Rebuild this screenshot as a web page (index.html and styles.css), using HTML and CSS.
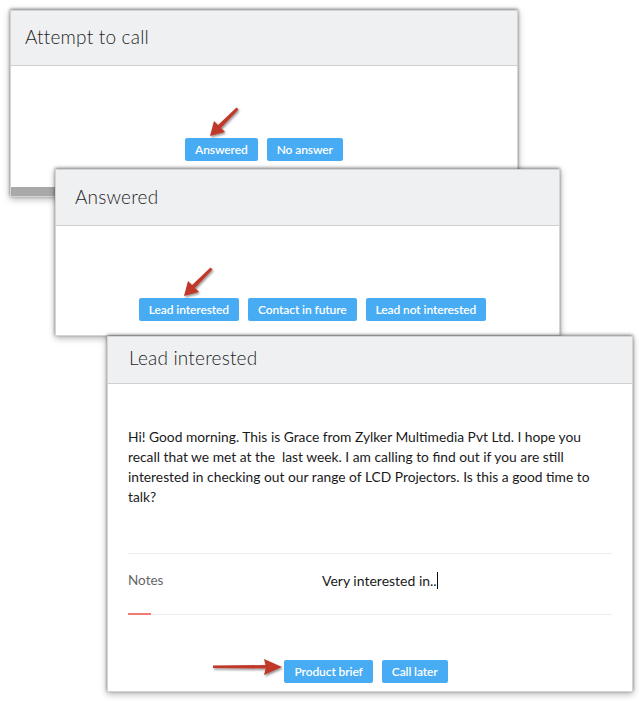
FILE: index.html
```html
<!DOCTYPE html>
<html>
<head>
<meta charset="utf-8">
<link rel="stylesheet" href="styles.css">
</head>
<body>
<div class="canvas">
  <section class="card card-1">
    <header class="card-head"><h2>Attempt to call</h2></header>
    <div class="card-body body-1">
      <div class="btns">
        <span class="btn">Answered</span>
        <span class="btn">No answer</span>
      </div>
    </div>
    <div class="scrollbar"></div>
  </section>

  <section class="card card-2">
    <header class="card-head"><h2>Answered</h2></header>
    <div class="card-body body-2">
      <div class="btns">
        <span class="btn">Lead interested</span>
        <span class="btn">Contact in future</span>
        <span class="btn">Lead not interested</span>
      </div>
    </div>
  </section>

  <section class="card card-3">
    <header class="card-head head-3"><h2>Lead interested</h2></header>
    <div class="card-body body-3">
      <p class="script">Hi! Good morning. This is Grace from Zylker Multimedia Pvt Ltd. I hope you<br>recall that we met at the &nbsp;last week. I am calling to find out if you are still<br>interested in checking out our range of LCD Projectors. Is this a good time to<br>talk?</p>
      <div class="notes">
        <span class="notes-label">Notes</span>
        <span class="notes-value">Very interested in..<span class="caret"></span></span>
      </div>
      <div class="btns btns-3">
        <span class="btn">Product brief</span>
        <span class="btn">Call later</span>
      </div>
    </div>
  </section>

  <svg class="arrow arrow-1" width="40" height="40" viewBox="0 0 40 40">
    <defs>
      <filter id="sh" x="-50%" y="-50%" width="200%" height="200%">
        <feDropShadow dx="1" dy="1.5" stdDeviation="1" flood-color="#000" flood-opacity="0.45"/>
      </filter>
    </defs>
    <g filter="url(#sh)">
      <polygon points="32.5,3.5 34.5,5.5 16,25 13,22" fill="#c0392b"/>
      <polygon points="6,32 10,17 21,28" fill="#c0392b"/>
    </g>
  </svg>
  <svg class="arrow arrow-2" width="40" height="40" viewBox="0 0 40 40">
    <g filter="url(#sh)">
      <polygon points="32.5,3.5 34.5,5.5 16,25 13,22" fill="#c0392b"/>
      <polygon points="6,32 10,17 21,28" fill="#c0392b"/>
    </g>
  </svg>
  <svg class="arrow arrow-3" width="80" height="24" viewBox="0 0 80 24">
    <g filter="url(#sh)">
      <polygon points="3,9.5 3,12 58,12.5 58,9" fill="#c0392b"/>
      <polygon points="72,11 54,3 56,11 54,19" fill="#c0392b"/>
    </g>
  </svg>
</div>
</body>
</html>
```

FILE: styles.css
```css
* { box-sizing: border-box; }
html, body {
  margin: 0;
  padding: 0;
  background: #ffffff;
}
body {
  font-family: "Lato", "Open Sans", sans-serif;
  color: #333;
}
.canvas {
  position: relative;
  width: 643px;
  height: 701px;
}
.card {
  position: absolute;
  background: #fff;
  border: 1px solid #d4d4d4;
  box-shadow: 0 -1px 3px rgba(0,0,0,0.45), 0 2px 7px rgba(0,0,0,0.3);
  display: flex;
  flex-direction: column;
}
.card-1 { left: 10px; top: 10px; width: 508px; height: 187px; }
.card-2 { left: 55px; top: 169px; width: 505px; height: 167px; }
.card-3 { left: 107px; top: 336px; width: 526px; height: 356px; }

.card-head {
  background: #eff0f2;
  border-bottom: 1px solid #cfd0d2;
  height: 55px;
  display: flex;
  align-items: center;
  padding-left: 14px;
  padding-bottom: 3px;
  flex: none;
}
.card-2 .card-head { padding-left: 19px; height: 56px; padding-bottom: 2px; }
.head-3 { height: 47px; padding-left: 21px; padding-bottom: 6px; }
.card-head h2 {
  margin: 0;
  font-weight: 300;
  font-size: 19px;
  color: #1e1e1e;
  letter-spacing: 0.2px;
}
.card-body { flex: 1; }
.body-1 { padding-top: 72px; }
.body-2 { padding-top: 72px; }
.btns {
  display: flex;
  justify-content: center;
  gap: 9px;
}
.card-2 .btns { padding-left: 10px; }
.btn {
  display: inline-flex;
  align-items: center;
  height: 23px;
  padding: 0 10px;
  background: #48acf4;
  color: #fff;
  font-size: 12px;
  font-weight: 600;
  border-radius: 2px;
  font-family: "Lato", sans-serif;
  letter-spacing: -0.1px;
}
.scrollbar {
  height: 9px;
  background: #a9a9a9;
  flex: none;
}
.body-3 {
  padding: 43px 20px 0 20px;
}
.script {
  margin: 0;
  font-size: 13.8px;
  line-height: 20px;
  color: #1a1a1a;
  white-space: nowrap;
}
.notes {
  margin-top: 46px;
  border-top: 1px solid #ececec;
  border-bottom: 1px solid #ececec;
  height: 62px;
  display: flex;
  align-items: center;
  position: relative;
  padding-bottom: 8px;
}
.notes::after {
  content: "";
  position: absolute;
  left: 0;
  bottom: -1px;
  width: 23px;
  height: 2px;
  background: #f27b74;
}
.notes-label {
  width: 194px;
  font-size: 13.5px;
  color: #666;
}
.notes-value {
  font-size: 14px;
  color: #1a1a1a;
  display: inline-flex;
  align-items: center;
}
.caret {
  display: inline-block;
  width: 1px;
  height: 17px;
  background: #111;
}
.btns-3 {
  margin-top: 45px;
  padding-right: 8px;
}
.arrow {
  position: absolute;
  overflow: visible;
}
.arrow-1 { left: 204px; top: 104px; }
.arrow-2 { left: 178px; top: 264px; }
.arrow-3 { left: 210px; top: 656px; }
```
